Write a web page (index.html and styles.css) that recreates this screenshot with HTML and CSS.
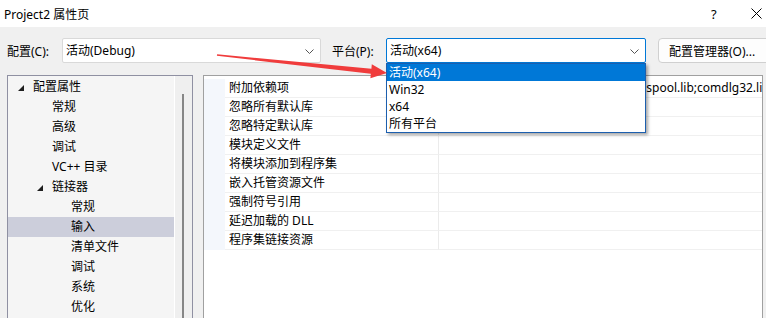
FILE: index.html
```html
<!DOCTYPE html>
<html>
<head>
    <meta charset="UTF-8">
    <title>Project2 属性页</title>
    <link rel="stylesheet" href="styles.css">
</head>
<body>
<div class="titlebar">
    <span class="title">Project2 属性页</span>
    <span class="help">?</span>
    <svg class="close" width="11" height="11" viewBox="0 0 11 11"><path d="M0.5 0.5L10.5 10.5M10.5 0.5L0.5 10.5" stroke="#000" stroke-width="1"/></svg>
</div>

<div class="toolbar">
    <span class="lbl lbl-config">配置(C):</span>
    <div class="combo combo-config">
        活动(Debug)
        <svg class="chev" width="9" height="5" viewBox="0 0 9 5"><path d="M0.5 0.5L4.5 4.5L8.5 0.5" fill="none" stroke="#555" stroke-width="1"/></svg>
    </div>
    <span class="lbl lbl-platform">平台(P):</span>
    <div class="combo combo-platform">
        活动(x64)
        <svg class="chev" width="9" height="5" viewBox="0 0 9 5"><path d="M0.5 0.5L4.5 4.5L8.5 0.5" fill="none" stroke="#555" stroke-width="1"/></svg>
        <div class="droplist">
            <div class="opt sel">活动(x64)</div>
            <div class="opt">Win32</div>
            <div class="opt">x64</div>
            <div class="opt">所有平台</div>
        </div>
    </div>
    <button class="btn">配置管理器(O)...</button>
</div>

<div class="main">
    <div class="tree">
        <div class="tree-list">
            <div class="node l0"><span class="tw"><svg width="6" height="6" viewBox="0 0 6 6"><path d="M6 0L6 6L0 6Z" fill="#1e1e1e"/></svg></span>配置属性</div>
            <div class="node l1">常规</div>
            <div class="node l1">高级</div>
            <div class="node l1">调试</div>
            <div class="node l1">VC++ 目录</div>
            <div class="node l1x"><span class="tw"><svg width="6" height="6" viewBox="0 0 6 6"><path d="M6 0L6 6L0 6Z" fill="#1e1e1e"/></svg></span>链接器</div>
            <div class="node l2">常规</div>
            <div class="node l2 active">输入</div>
            <div class="node l2">清单文件</div>
            <div class="node l2">调试</div>
            <div class="node l2">系统</div>
            <div class="node l2">优化</div>
        </div>
        <div class="vscroll"><div class="thumb"></div></div>
    </div>

    <div class="grid">
        <div class="row"><div class="gut"></div><div class="name">附加依赖项</div><div class="val">kernel32.lib;user32.lib;gdi32.lib;winspool.lib;comdlg32.lib;advapi32.lib;shell32.lib;ole32.lib;oleaut32.lib;uuid.lib;odbc32.lib;odbccp32.lib;%(AdditionalDependencies)</div></div>
        <div class="row"><div class="gut"></div><div class="name">忽略所有默认库</div><div class="val"></div></div>
        <div class="row"><div class="gut"></div><div class="name">忽略特定默认库</div><div class="val"></div></div>
        <div class="row"><div class="gut"></div><div class="name">模块定义文件</div><div class="val"></div></div>
        <div class="row"><div class="gut"></div><div class="name">将模块添加到程序集</div><div class="val"></div></div>
        <div class="row"><div class="gut"></div><div class="name">嵌入托管资源文件</div><div class="val"></div></div>
        <div class="row"><div class="gut"></div><div class="name">强制符号引用</div><div class="val"></div></div>
        <div class="row"><div class="gut"></div><div class="name">延迟加载的 DLL</div><div class="val"></div></div>
        <div class="row"><div class="gut"></div><div class="name">程序集链接资源</div><div class="val"></div></div>
    </div>
</div>

<!-- red annotation arrow -->
<svg class="arrow" width="766" height="318" viewBox="0 0 766 318">
    <polygon points="217.1,54.2 371.4,68.8 371.8,64.3 387,73 370.4,78.3 370.8,73.8 216.9,55.8" fill="#f03c3c"/>
</svg>
</body>
</html>
```

FILE: styles.css
```css
body {
    margin: 0;
    width: 766px;
    height: 318px;
    overflow: hidden;
    position: relative;
    background-color: #f0f0f0;
    font-family: "Noto Sans", "Noto Sans CJK SC", sans-serif;
    font-size: 12px;
    color: #000;
}

.titlebar {
    height: 27px;
    background-color: #fff;
    display: flex;
    align-items: center;
}
.title {
    padding-left: 4px;
    flex: 1;
}
.help {
    width: 12px;
    margin-right: 28px;
    font-size: 13px;
}
.close {
    margin-right: 4px;
}

.toolbar {
    display: flex;
    align-items: center;
    height: 25px;
    margin-top: 11px;
    padding-left: 7px;
}
.lbl {
    flex: none;
}
.lbl-config {
    width: 55px;
}
.lbl-platform {
    width: 54px;
    margin-left: 11px;
}

.combo {
    position: relative;
    flex: none;
    box-sizing: border-box;
    height: 25px;
    line-height: 23px;
    padding-left: 3px;
    background-color: #fff;
    border: 1px solid #d9d9d9;
    border-radius: 2px;
}
.combo-config {
    width: 259px;
}
.combo-platform {
    width: 260px;
    border-color: #0078d7;
}
.chev {
    position: absolute;
    right: 6px;
    top: 10px;
}

.droplist {
    position: absolute;
    left: -1px;
    top: 24px;
    width: 258px;
    border: 1px solid #1c5fae;
    background-color: #fff;
    box-shadow: 2px 2px 3px rgba(0, 0, 0, 0.35);
    z-index: 2;
}
.opt {
    height: 17px;
    line-height: 17px;
    padding-left: 2px;
}
.opt.sel {
    background-color: #0078d7;
    color: #fff;
}

.btn {
    flex: none;
    margin-left: 12px;
    width: 112px;
    height: 25px;
    padding: 0 0 0 10px;
    text-align: left;
    font-family: "Noto Sans", "Noto Sans CJK SC", sans-serif;
    font-size: 12px;
    color: #000;
    background-color: #fdfdfd;
    border: 1px solid #d0d0d0;
    border-radius: 4px;
}

.main {
    display: flex;
    gap: 10px;
    margin-top: 12px;
    padding-left: 7px;
}

.tree {
    display: flex;
    flex: none;
    width: 186px;
    height: 244px;
    box-sizing: border-box;
    border: 1px solid #8f90a2;
}
.tree-list {
    width: 166px;
    padding-top: 1px;
    background-color: #f5f5f5;
    border-right: 1px solid #fff;
}
.node {
    height: 20px;
    line-height: 20px;
    white-space: nowrap;
}
.node.active {
    background-color: #cccedb;
}
.tw {
    display: inline-block;
    width: 15px;
    height: 20px;
    vertical-align: top;
}
.tw svg {
    display: block;
    margin-top: 8px;
}
.l0 { padding-left: 10px; }
.l1 { padding-left: 44px; }
.l1x { padding-left: 29px; }
.l2 { padding-left: 63px; }

.vscroll {
    flex: 1;
    background-color: #efefef;
    position: relative;
    overflow: hidden;
}
.thumb {
    position: absolute;
    left: 7px;
    top: 18px;
    width: 2px;
    height: 230px;
    background-color: #868686;
}

.grid {
    flex: none;
    width: 560px;
    height: 244px;
    box-sizing: border-box;
    padding-top: 3px;
    background-color: #fff;
    border: 1px solid #a0a0a0;
}
.row {
    display: flex;
    height: 19px;
}
.gut {
    width: 21px;
    background-color: #f4f7fc;
}
.name {
    box-sizing: border-box;
    width: 214px;
    padding-left: 4px;
    line-height: 18px;
    border-bottom: 1px solid #f0f0f0;
    border-right: 1px solid #ebebeb;
    white-space: nowrap;
}
.val {
    flex: 1;
    min-width: 0;
    padding-left: 8px;
    line-height: 18px;
    border-bottom: 1px solid #f0f0f0;
    white-space: nowrap;
    overflow: hidden;
}

.arrow {
    position: absolute;
    left: 0;
    top: 0;
    z-index: 3;
    pointer-events: none;
}
```
